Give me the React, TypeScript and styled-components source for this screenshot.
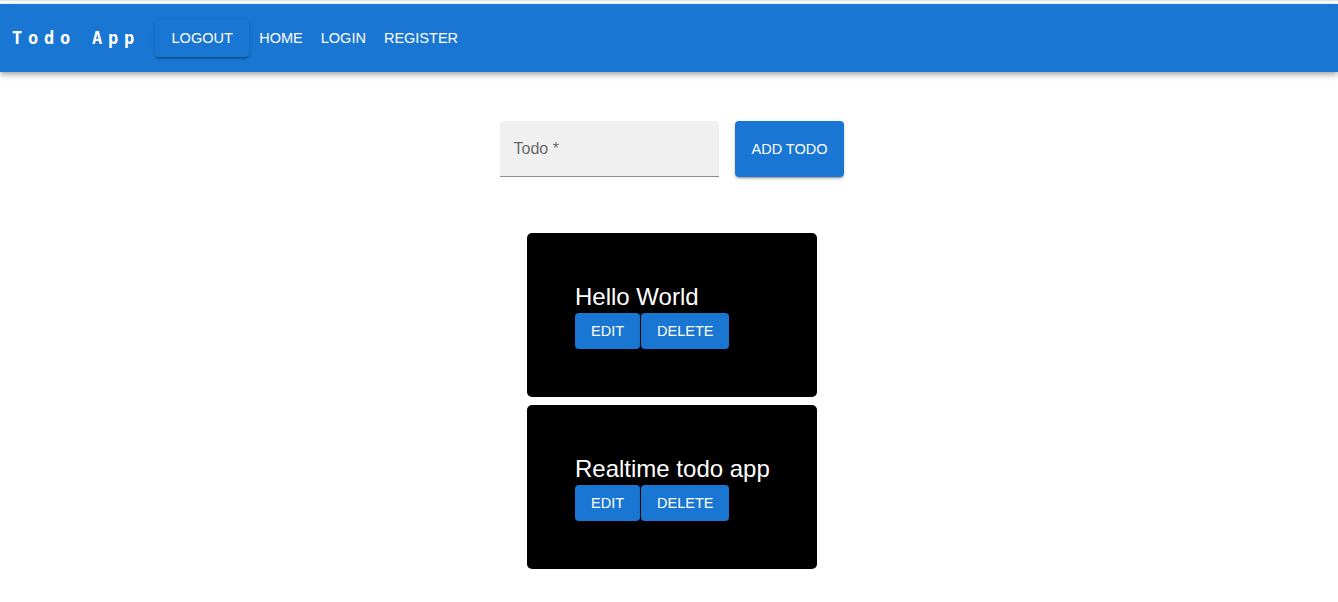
import React from "react";
import styled, { createGlobalStyle } from "styled-components";

const GlobalStyle = createGlobalStyle`
  html, body {
    margin: 0;
    padding: 0;
    background: #ffffff;
  }
  body {
    font-family: "Liberation Sans", Arial, sans-serif;
    border-top: 1px solid #e4e4e4;
  }
  * { box-sizing: border-box; }
`;

const Page = styled.div`
  padding-top: 3px;
`;

const AppBar = styled.header`
  height: 68px;
  background: #1976d2;
  color: #fff;
  display: flex;
  align-items: center;
  padding-left: 12px;
  box-shadow: 0px 2px 4px -1px rgba(0,0,0,0.2), 0px 4px 5px 0px rgba(0,0,0,0.14), 0px 1px 10px 0px rgba(0,0,0,0.12);
`;

const Brand = styled.div`
  font-family: "DejaVu Sans Mono", monospace;
  font-weight: 700;
  font-size: 17px;
  letter-spacing: 5.77px;
  margin-right: 15px;
  white-space: pre;
`;

const Nav = styled.nav`
  display: flex;
  align-items: center;
  gap: 2px;
`;

const BaseButton = styled.button`
  font-family: "Liberation Sans", Arial, sans-serif;
  font-size: 14.5px;
  line-height: 24px;
  text-transform: uppercase;
  color: #fff;
  border: 0;
  cursor: pointer;
  white-space: nowrap;
`;

const Contained = styled(BaseButton)<{ $tall?: boolean }>`
  background: #1976d2;
  border-radius: 4px;
  padding: ${(p) => (p.$tall ? "16px 16px" : "6px 16px")};
  box-shadow: 0px 3px 1px -2px rgba(0,0,0,0.2), 0px 2px 2px 0px rgba(0,0,0,0.14), 0px 1px 5px 0px rgba(0,0,0,0.12);
`;

const NavLink = styled(BaseButton)`
  background: transparent;
  padding: 6px 8px;
`;

const LogoutButton = styled(Contained)`
  padding: 6px 16.5px 7px;
  margin-top: 1px;
`;

const Main = styled.main`
  display: flex;
  flex-direction: column;
  align-items: center;
  padding-top: 49px;
  padding-left: 6px;
`;

const Form = styled.form`
  display: flex;
  align-items: flex-start;
  gap: 16px;
`;

const Field = styled.div`
  width: 219px;
  height: 56px;
  background: rgba(0,0,0,0.06);
  border-top-left-radius: 4px;
  border-top-right-radius: 4px;
  border-bottom: 1px solid rgba(0,0,0,0.42);
  display: flex;
  align-items: center;
  padding-left: 13px;
  padding-top: 1px;
`;

const Label = styled.span`
  font-family: "Liberation Sans", Arial, sans-serif;
  font-size: 16px;
  color: rgba(0,0,0,0.6);
`;

const List = styled.div`
  display: flex;
  flex-direction: column;
  gap: 8px;
  margin-top: 56px;
`;

const Card = styled.div`
  width: 290px;
  background: #000;
  border-radius: 5px;
  padding: 48px;
  display: flex;
  flex-direction: column;
  align-items: flex-start;
`;

const Title = styled.div`
  color: #fff;
  font-size: 24px;
  line-height: 32px;
  white-space: nowrap;
`;

const Actions = styled.div`
  display: flex;
  gap: 1px;
`;

const todos = ["Hello World", "Realtime todo app"];

export default function App() {
  return (
    <>
      <GlobalStyle />
      <Page>
        <AppBar>
          <Brand>Todo App</Brand>
          <Nav>
            <LogoutButton>Logout</LogoutButton>
            <NavLink>Home</NavLink>
            <NavLink>Login</NavLink>
            <NavLink>Register</NavLink>
          </Nav>
        </AppBar>
        <Main>
          <Form onSubmit={(e) => e.preventDefault()}>
            <Field>
              <Label>Todo *</Label>
            </Field>
            <Contained $tall type="submit">Add Todo</Contained>
          </Form>
          <List>
            {todos.map((t) => (
              <Card key={t}>
                <Title>{t}</Title>
                <Actions>
                  <Contained>Edit</Contained>
                  <Contained>Delete</Contained>
                </Actions>
              </Card>
            ))}
          </List>
        </Main>
      </Page>
    </>
  );
}
